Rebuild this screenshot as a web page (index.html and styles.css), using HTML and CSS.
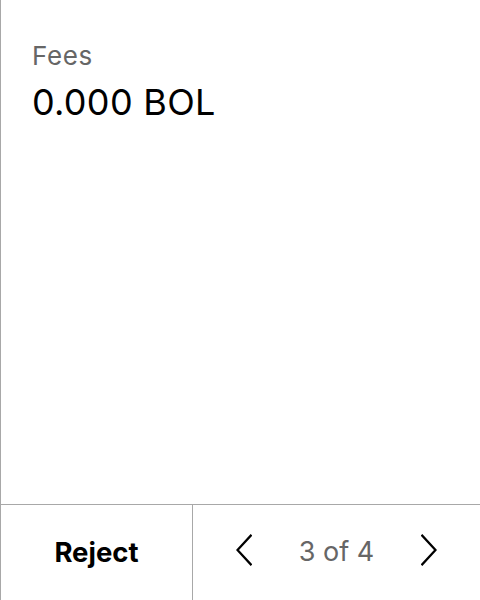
FILE: index.html
```html
<!DOCTYPE html>
<html>
<head>
<meta charset="utf-8">
<link rel="stylesheet" href="styles.css">
</head>
<body>
<div class="screen">
  <div class="content">
    <div class="label">Fees</div>
    <div class="value">0.000 BOL</div>
  </div>
  <div class="footer">
    <div class="reject">Reject</div>
    <div class="pager">
      <svg class="chev" width="16" height="32" viewBox="0 0 16 32"><path d="M15.5 0.8 L1.5 16 L15.5 31.2" fill="none" stroke="#000" stroke-width="2.3"/></svg>
      <span class="count">3 of 4</span>
      <svg class="chev" width="16" height="32" viewBox="0 0 16 32"><path d="M0.5 0.8 L14.5 16 L0.5 31.2" fill="none" stroke="#000" stroke-width="2.3"/></svg>
    </div>
  </div>
</div>
</body>
</html>
```
FILE: styles.css
```css
html, body {
  margin: 0;
  padding: 0;
  background: #fff;
}
.screen {
  width: 480px;
  height: 600px;
  box-sizing: border-box;
  border-left: 1px solid #a8a8a8;
  display: flex;
  flex-direction: column;
  font-family: Inter, "Noto Sans", sans-serif;
}
.content {
  flex: 1;
  padding: 41px 0 0 31px;
}
.label {
  font-size: 26px;
  line-height: 30px;
  letter-spacing: 0.6px;
  color: #666;
}
.value {
  margin-top: 10px;
  font-size: 36px;
  line-height: 42px;
  letter-spacing: 0.3px;
  color: #000;
}
.footer {
  height: 96px;
  box-sizing: border-box;
  border-top: 1px solid #a8a8a8;
  padding-bottom: 5px;
  display: flex;
}
.reject {
  width: 191px;
  border-right: 1px solid #a8a8a8;
  margin-bottom: -5px;
  padding-top: 4px;
  padding-bottom: 5px;
  display: flex;
  align-items: center;
  justify-content: center;
  font-size: 27.5px;
  line-height: 32px;
  font-weight: 700;
  color: #000;
}
.pager {
  flex: 1;
  display: flex;
  align-items: center;
  justify-content: center;
  gap: 47px;
}
.count {
  padding-top: 4px;
  font-size: 27px;
  line-height: 32px;
  color: #666;
}
```
